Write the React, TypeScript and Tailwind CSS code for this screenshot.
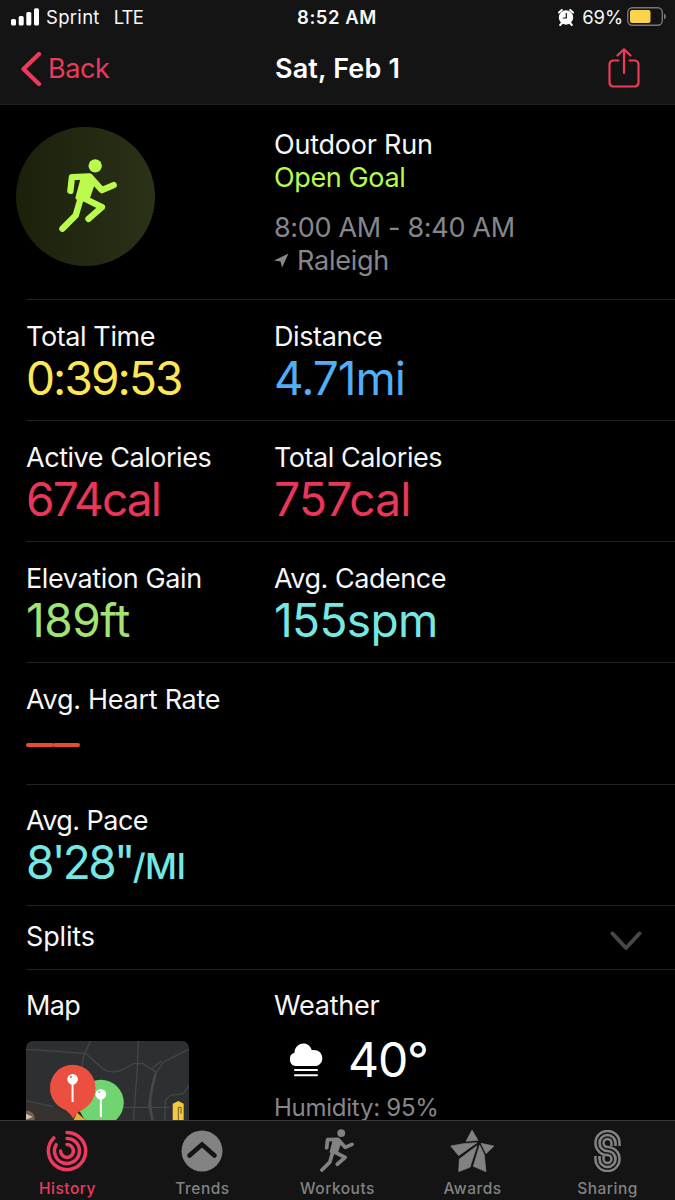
import type { ReactNode } from 'react';

function Runner({ className }: { className: string }) {
  return (
    <svg className={className} viewBox="179 146 173 218" fill="none" stroke="currentColor" strokeWidth="19" strokeLinecap="round" strokeLinejoin="round">
      <circle cx="287" cy="166.500" r="20" fill="currentColor" stroke="none" />
      <path d="M213 241L217.500 200L270 198L307 239L342 224" />
      <path d="M250 202L234 262L241 268L264 266L282 214L272 198Z" fill="currentColor" strokeWidth="12" />
      <path d="M243 266L229 314L189 354" />
      <path d="M255 264L307 290L267 325" />
    </svg>
  );
}

function Rings() {
  return (
    <svg className="h-[42px] w-[42px]" viewBox="-21 -21 42 42" fill="none" stroke="currentColor" strokeWidth="3.5" strokeLinecap="round">
      <path d="M0-18.600A18.600 18.600 0 1 1-13.200-13.100" />
      <path d="M0-12.500A12.500 12.500 0 1 1-10.800-6.300" />
      <path d="M0-6.400A6.400 6.400 0 1 1-6.400 0" />
    </svg>
  );
}

function TrendsIcon() {
  return (
    <svg className="h-[42px] w-[42px]" viewBox="0 0 42 42" fill="none">
      <circle cx="21" cy="21" r="20.500" fill="currentColor" />
      <path d="M8.500 25.500L21 14.500L33.500 25.500" stroke="#141414" strokeWidth="4.600" strokeLinecap="round" />
    </svg>
  );
}

function AwardsIcon() {
  return (
    <svg className="h-[44px] w-[45px]" viewBox="569 450 135 132" fill="currentColor" stroke="currentColor" strokeWidth="2" strokeLinejoin="round">
      <path d="M635 453L653 484L617 487Z" />
      <path d="M571 501L609 494L650 491L595 530Z" />
      <path d="M597 540L650 500L629 565L595 578Z" />
      <path d="M658 498L639 562L677 578L672 528Z" />
      <path d="M662 493L701 501L677 524Z" />
    </svg>
  );
}

function SharingIcon() {
  const s = 'M21 16V13A8 8 0 1 0 13 21A8 8 0 1 1 5 29V26';
  return (
    <svg className="h-[42px] w-[27px]" viewBox="-0.500 0 27 42" fill="none">
      <path d={s} stroke="currentColor" strokeWidth="10.600" />
      <path d={s} stroke="#141414" strokeWidth="5.600" />
      <path d={s} stroke="currentColor" strokeWidth="2.700" />
    </svg>
  );
}

function Stat({ label, value, labelClass, valueClass }: { label: ReactNode; value: ReactNode; labelClass: string; valueClass: string }) {
  return (
    <div className="w-[248px] whitespace-nowrap">
      <div className={`text-[27px] leading-[32px] ${labelClass}`}>{label}</div>
      <div className={`text-[46px] leading-[50px] ${valueClass}`}>{value}</div>
    </div>
  );
}

const tabs = [
  { name: 'History', icon: <Rings />, color: 'text-[#ec3a61]' },
  { name: 'Trends', icon: <TrendsIcon />, color: 'text-[#828282]' },
  { name: 'Workouts', icon: <Runner className="h-[43px] w-[34px]" />, color: 'text-[#828282]' },
  { name: 'Awards', icon: <AwardsIcon />, color: 'text-[#828282]' },
  { name: 'Sharing', icon: <SharingIcon />, color: 'text-[#828282]' },
];

export default function App() {
  return (
    <div className="flex h-[1200px] w-[675px] flex-col overflow-hidden bg-black font-['Inter',sans-serif] text-[#f7f7f7]">
      <header className="h-[105px] shrink-0 border-b border-[#1e1e1e] bg-[#141414]">
        <div className="grid h-[34px] grid-cols-[1fr_auto_1fr] items-center px-[11px] text-[18.500px] leading-[34px]">
          <div className="flex items-center">
            <svg className="mr-[7px] h-[18px] w-[28px]" viewBox="0 0 28 18" fill="#fff">
              <rect x="0" y="11" width="5" height="6.500" rx="1.500" />
              <rect x="7.700" y="8" width="5" height="9.500" rx="1.500" />
              <rect x="15.300" y="4" width="5" height="13.500" rx="1.500" />
              <rect x="23" y="0.300" width="5" height="17.200" rx="1.500" />
            </svg>
            <span className="tracking-[0.3px]">Sprint</span>
            <span className="ml-[14px] tracking-[-0.8px]">LTE</span>
          </div>
          <div className="mr-[-1px] ml-[-2px] font-semibold tracking-[0.55px]">8:52 AM</div>
          <div className="flex items-center justify-end">
            <svg className="mr-[8px] h-[17px] w-[16px]" viewBox="0 0 16 17" fill="none">
              <circle cx="8" cy="8.500" r="7.200" fill="#fff" />
              <path d="M1 3.500L3.800 1M15 3.500L12.200 1M2.200 16L4 14M13.800 16L12 14" stroke="#fff" strokeWidth="2" strokeLinecap="round" />
              <path d="M8.300 4V9H4.800" stroke="#141414" strokeWidth="1.200" />
            </svg>
            <span className="tracking-[-0.1px]">69%</span>
            <svg className="mt-[-2px] mr-[-3px] ml-[4px] h-[19px] w-[40px]" viewBox="0 0 40 19" fill="none">
              <rect x="0.800" y="0.800" width="34.500" height="17.400" rx="4.500" stroke="#77777a" strokeWidth="1.400" />
              <rect x="3" y="3" width="20.500" height="13" rx="2" fill="#fbd34b" />
              <path d="M37 6.500Q39 7.500 39 9.500Q39 11.500 37 12.500Z" fill="#77777a" />
            </svg>
          </div>
        </div>
        <div className="grid h-[70px] grid-cols-[1fr_auto_1fr] items-center pr-[35px] pl-[20px]">
          <div className="flex items-center text-[#ec3a5d]">
            <svg className="mr-[6px] h-[36px] w-[22px]" viewBox="0 0 22 36" fill="none" stroke="currentColor" strokeWidth="4.300" strokeLinecap="round" strokeLinejoin="round">
              <path d="M19 3L3.500 18L19 33" />
            </svg>
            <span className="text-[27px] tracking-[-0.4px]">Back</span>
          </div>
          <div className="mt-px mr-[-15px] text-[27px] font-semibold tracking-[0.15px] text-white">Sat, Feb 1</div>
          <svg className="mt-[-2px] h-[42px] w-[32px] justify-self-end" viewBox="0 0 32 42" fill="none" stroke="#ec3a5d" strokeWidth="2.200" strokeLinecap="round" strokeLinejoin="round">
            <path d="M10.500 13.500H5A4 4 0 0 0 1.500 17V36A4 4 0 0 0 5 39.500H27A4 4 0 0 0 30.500 36V17A4 4 0 0 0 27 13.500H21.500" />
            <path d="M16 26V2.500M9.500 8.500L16 2.200L22.500 8.500" />
          </svg>
        </div>
      </header>

      <main className="min-h-0 flex-1 overflow-hidden">
        <section className="flex h-[194px] pl-[16px]">
          <div className="mt-[22px] flex h-[139px] w-[139px] items-center justify-center rounded-full bg-linear-to-r from-[#1b200b] to-[#2a3217]">
            <Runner className="mt-[-3px] ml-[5px] h-[73px] w-[58px] text-[#bbfb4e]" />
          </div>
          <div className="ml-[119px] pt-[23px] text-[27px] leading-[33px]">
            <div className="tracking-[-0.22px]">Outdoor Run</div>
            <div className="tracking-[-0.38px] text-[#b6fb4c]">Open Goal</div>
            <div className="mt-[17px] tracking-[-0.33px] text-[#87878b]">8:00 AM - 8:40 AM</div>
            <div className="flex items-center tracking-[-0.25px] text-[#87878b]">
              <svg className="mr-[8px] h-[15px] w-[15px]" viewBox="0 0 15 15" fill="currentColor"><path d="M14.500 0.500L8 14.800L6.600 8.600L0 7.500Z" /></svg>
              Raleigh
            </div>
          </div>
        </section>

        <div className="ml-[26px]">
          <section className="flex h-[121px] border-t border-[#222] pt-[21px]">
            <Stat label="Total Time" value="0:39:53" labelClass="tracking-[-0.4px]" valueClass="tracking-[-1.9px] text-[#fde754]" />
            <Stat label="Distance" value="4.71mi" labelClass="tracking-[-0.4px]" valueClass="tracking-[-1px] text-[#51aef7]" />
          </section>
          <section className="flex h-[121px] border-t border-[#222] pt-[21px]">
            <Stat label="Active Calories" value="674cal" labelClass="tracking-[-0.46px]" valueClass="tracking-[-1.9px] text-[#ea3658]" />
            <Stat label="Total Calories" value="757cal" labelClass="tracking-[-0.46px]" valueClass="tracking-[-0.7px] text-[#ea3658]" />
          </section>
          <section className="flex h-[121px] border-t border-[#222] pt-[21px]">
            <Stat label="Elevation Gain" value="189ft" labelClass="tracking-[-0.38px]" valueClass="tracking-[-0.5px] text-[#a1e474]" />
            <Stat label="Avg. Cadence" value="155spm" labelClass="tracking-[-0.48px]" valueClass="tracking-[-0.6px] text-[#76e8e3]" />
          </section>
          <section className="h-[122px] border-t border-[#222] pt-[21px]">
            <div className="text-[27px] leading-[32px] tracking-[-0.27px]">Avg. Heart Rate</div>
            <div className="mt-[27px] flex"><span className="h-[4px] w-[28px] rounded-full bg-[#e54d33]" /><span className="ml-[-1px] h-[4px] w-[27px] rounded-full bg-[#e54d33]" /></div>
          </section>
          <section className="h-[121px] border-t border-[#222] pt-5">
            <Stat label="Avg. Pace" value={<>8'28"<span className="text-[35px] font-medium tracking-[-0.6px]">/MI</span></>} labelClass="tracking-[-0.55px]" valueClass="tracking-[-2.7px] text-[#76e8e3]" />
          </section>
          <section className="flex h-[64px] items-center justify-between border-t border-[#222] pr-[33px] text-[27px]">
            <span className="tracking-[-0.15px]">Splits</span>
            <svg className="mt-[7px] h-[20px] w-[32px]" viewBox="0 0 32 20" fill="none" stroke="#48484a" strokeWidth="4" strokeLinecap="round" strokeLinejoin="round"><path d="M2.500 2.500L16 17L29.500 2.500" /></svg>
          </section>
          <section className="flex border-t border-[#222] pt-5">
            <div className="w-[248px]">
              <div className="text-[27px] leading-[32px] tracking-[-0.6px]">Map</div>
              <svg className="mt-[19px] h-[80px] w-[163px] rounded-t-[7px]" viewBox="78 32 490 240" preserveAspectRatio="none" fill="none">
                <rect x="78" y="32" width="490" height="240" fill="#2d2f31" />
                <path d="M78 210L160 230L240 272H78Z" fill="#35322f" />
                <g stroke="#434648" strokeWidth="4">
                  <path d="M78 57L185 64L258 70L310 116Q330 130 362 121L403 99L430 100L472 127" />
                  <path d="M272 32L252 74L246 112M416 32L412 120L401 272M568 57L492 94L467 130L452 200L458 272" />
                  <path d="M78 211L160 229M372 231H510M495 272L497 210L512 195L550 190L568 166M458 113L486 92" />
                </g>
                <path d="M468 128L455 180L449 225L459 272" stroke="#46494b" strokeWidth="8" />
                <circle cx="82" cy="263" r="22" fill="#77604d" />
                <path d="M78 250L98 260L78 268Z" fill="#d5c5b2" />
                <path d="M519 272V220L536 212L552 220V272Z" fill="#f5c83f" />
                <path d="M536 272V231H544V250" stroke="#6b5a24" strokeWidth="3" />
                <circle cx="303" cy="217" r="69" fill="#70d571" />
                <path d="M220 272L232 245L255 266V272Z" fill="#e5ad39" />
                <path d="M231 246L252 265L240 244Z" fill="#23251f" />
                <path d="M303 190V260" stroke="#fff" strokeWidth="6" />
                <circle cx="303" cy="192" r="16" fill="#fff" /><circle cx="298" cy="186" r="3" fill="#70d571" />
                <path d="M150 172A68.500 68.500 0 1 1 287 172C287 210 262 232 241 242Q226 250 221 265Q210 249 197 239C172 229 150 207 150 172Z" fill="#eb4f40" />
                <path d="M218 150V215" stroke="#fff" strokeWidth="6" />
                <circle cx="218" cy="147" r="16" fill="#fff" /><circle cx="213" cy="140" r="3" fill="#eb4f40" />
              </svg>
            </div>
            <div>
              <div className="text-[27px] leading-[32px] tracking-[-0.25px]">Weather</div>
              <div className="mt-[11px] flex h-[54px] items-center">
                <svg className="mt-[-1px] ml-[15px] h-[34px] w-[34px]" viewBox="0 0 34 34" fill="#fff">
                  <path d="M6.700 23A6.800 6.800 0 0 1 5.500 9.800C5.500 4.500 9.500 0.500 14.500 0.500C18.500 0.500 21.600 3 22.800 7.200C28.500 6 33.300 9.800 33.300 15.200C33.300 19.800 30 23 26 23Z" />
                  <path d="M6 27H28M6 32.300H28" stroke="#fff" strokeWidth="2" strokeLinecap="round" />
                </svg>
                <span className="ml-[25px] text-[48px] leading-[54px] tracking-[-1.1px] text-white">40°</span>
              </div>
              <div className="mt-[6px] text-[24px] leading-[30px] tracking-[-0.25px] text-[#87878b]">Humidity: 95%</div>
            </div>
          </section>
        </div>
      </main>

      <nav className="grid h-[80px] shrink-0 grid-cols-5 border-t border-[#393939] bg-[#141414]">
        {tabs.map((tab) => (
          <div key={tab.name} className={`flex flex-col items-center pt-[7px] ${tab.color}`}>
            <div className="mr-px flex h-[45px] items-center justify-center">{tab.icon}</div>
            <span className="mt-[6px] text-[15.500px] leading-[20px] font-medium tracking-[0.5px]">{tab.name}</span>
          </div>
        ))}
      </nav>
    </div>
  );
}
